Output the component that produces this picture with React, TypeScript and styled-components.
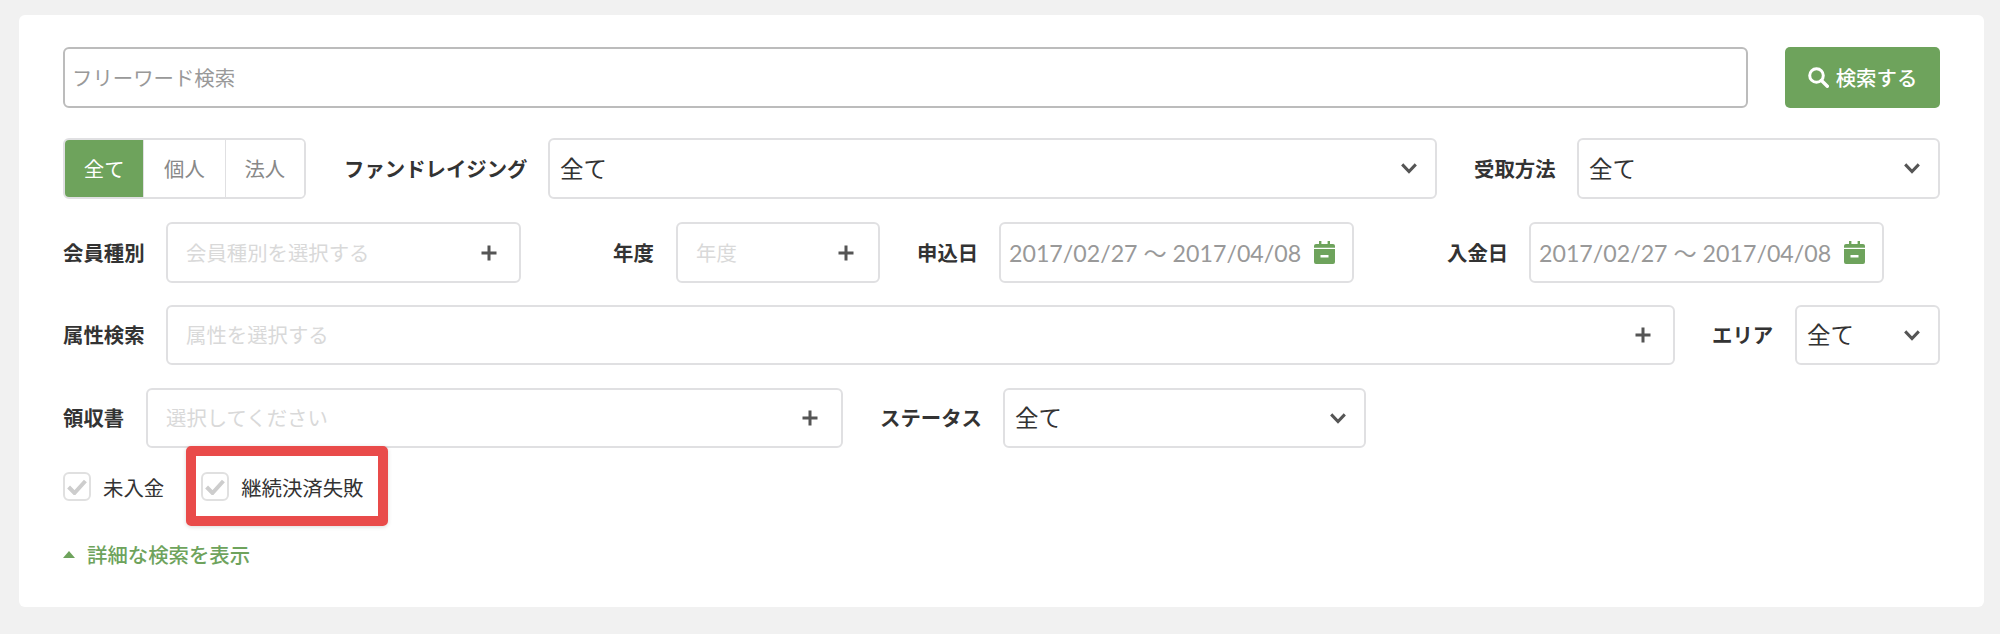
import React from "react";
import styled, { createGlobalStyle } from "styled-components";

const Global = createGlobalStyle`
  html, body { margin: 0; padding: 0; background: #f1f1f1; }
  body { font-family: "Lato", "Noto Sans CJK JP", sans-serif; color: #333; }
  * { box-sizing: border-box; }
`;

const Card = styled.div`
  margin: 15px 16px 27px 19px;
  height: 592px;
  padding: 32px 44px 0;
  background: #fff;
  border-radius: 6px;
`;

const Row = styled.div<{ $top?: number; $height?: number }>`
  display: flex;
  align-items: center;
  height: ${(p) => p.$height ?? 61}px;
  margin-top: ${(p) => p.$top ?? 0}px;
`;

const Field = styled.div<{ $left?: number }>`
  display: flex;
  align-items: center;
  height: 100%;
  margin-left: ${(p) => p.$left ?? 0}px;
`;

const Label = styled.span<{ $width: number }>`
  flex: none;
  width: ${(p) => p.$width}px;
  padding-bottom: 2px;
  font-size: 20.4px;
  font-weight: 700;
  color: #333;
  white-space: nowrap;
`;

const Control = styled.div<{ $width: number }>`
  display: flex;
  flex: none;
  align-items: center;
  justify-content: space-between;
  width: ${(p) => p.$width}px;
  height: 100%;
  background: #fff;
  border: 2px solid #e0e0e2;
  border-radius: 6px;
`;

const SearchBox = styled(Control)`
  border-color: #bcbcbc;
  padding: 0 0 2px 7px;
  font-size: 20.4px;
  color: #999;
`;

const SearchButton = styled.div`
  display: flex;
  align-items: center;
  justify-content: center;
  gap: 7px;
  width: 155px;
  height: 100%;
  margin-left: 37px;
  padding-bottom: 1px;
  background: #6ea35c;
  border-radius: 5px;
  color: #fff;
  font-size: 20.4px;
  font-weight: 500;
`;

const Segmented = styled.div`
  display: flex;
  width: 243px;
  height: 100%;
  border: 2px solid #e0e0e2;
  border-radius: 6px;
  overflow: hidden;
`;

const Segment = styled.div<{ $active?: boolean; $width: number }>`
  display: flex;
  align-items: center;
  justify-content: center;
  width: ${(p) => p.$width}px;
  padding-bottom: 2px;
  font-size: 20.4px;
  background: ${(p) => (p.$active ? "#6ea35c" : "#fff")};
  color: ${(p) => (p.$active ? "#fff" : "#888")};
  & + & { border-left: ${(p) => (p.$active ? 0 : 1)}px solid #e0e0e2; }
`;

const SelectValue = styled.span`
  font-size: 23.5px;
  color: #333;
  padding: 0 0 2px 10px;
`;

const Placeholder = styled.span`
  font-size: 20.4px;
  color: #d9d9d9;
  padding: 0 0 2px 18px;
`;

const DateValue = styled.span`
  font-size: 23.2px;
  color: #999;
  padding: 0 0 2px 8px;
  white-space: nowrap;
`;

const IconSlot = styled.span<{ $right: number }>`
  display: flex;
  margin-right: ${(p) => p.$right}px;
`;

const CheckRow = styled(Row)`
  height: 29px;
  margin-top: 24px;
`;

const CheckItem = styled.label<{ $left?: number }>`
  position: relative;
  display: flex;
  align-items: center;
  gap: 12px;
  margin-left: ${(p) => p.$left ?? 0}px;
  font-size: 20.4px;
  color: #333;
`;

const CheckBox = styled.span`
  display: flex;
  align-items: center;
  justify-content: center;
  width: 28px;
  height: 29px;
  border: 2px solid #e0e0e0;
  border-radius: 6px;
  background: #fff;
`;

const Highlight = styled.span`
  position: absolute;
  left: -15px;
  top: -26px;
  width: 202px;
  height: 80px;
  border: 10px solid #e94b4a;
  border-radius: 5px;
  box-shadow: 0 1px 4px rgba(0, 0, 0, 0.15);
`;

const MoreLink = styled.div`
  display: flex;
  align-items: center;
  gap: 12px;
  margin-top: 40px;
  height: 26px;
  font-size: 20.4px;
  font-weight: 500;
  color: #6ea35c;
`;

const Triangle = styled.span`
  width: 0;
  height: 0;
  border-left: 6px solid transparent;
  border-right: 6px solid transparent;
  border-bottom: 7px solid #6ea35c;
`;

const Chevron = () => (
  <svg width="16" height="11" viewBox="0 0 16 11" fill="none">
    <path d="M1.2 1.4 L8 8.6 L14.8 1.4" stroke="#555" strokeWidth="3" />
  </svg>
);

const Plus = () => (
  <svg width="16" height="16" viewBox="0 0 16 16" fill="none">
    <path d="M8 0.5 V15.5 M0.5 8 H15.5" stroke="#555" strokeWidth="3" />
  </svg>
);

const Calendar = () => (
  <svg width="21" height="23" viewBox="0 0 21 23">
    <path
      fillRule="evenodd"
      fill="#6ea35c"
      d="M5 0 h2.4 v3 h6.2 v-3 h2.4 v3 h3 a2 2 0 0 1 2 2 v1.8 h-21 v-1.8 a2 2 0 0 1 2 -2 h3 z M0 8 h21 v13 a2 2 0 0 1 -2 2 h-17 a2 2 0 0 1 -2 -2 z M6.5 14 v2.6 h8 v-2.6 z"
    />
  </svg>
);

const Check = () => (
  <svg width="20" height="16" viewBox="0 0 20 16" fill="none">
    <path d="M1.6 8 L7.5 14 L18.4 2" stroke="#cdcdcd" strokeWidth="4" />
  </svg>
);

const SearchIcon = () => (
  <svg width="21" height="21" viewBox="0 0 21 21" fill="none">
    <circle cx="8.5" cy="8.5" r="6.8" stroke="#fff" strokeWidth="3" />
    <path d="M13.5 13.5 L19.3 19.3" stroke="#fff" strokeWidth="3.4" strokeLinecap="round" />
  </svg>
);

const Select = ({ width }: { width: number }) => (
  <Control $width={width}>
    <SelectValue>全て</SelectValue>
    <IconSlot $right={18}><Chevron /></IconSlot>
  </Control>
);

const Picker = ({ width, text, plusRight = 22 }: { width: number; text: string; plusRight?: number }) => (
  <Control $width={width}>
    <Placeholder>{text}</Placeholder>
    <IconSlot $right={plusRight}><Plus /></IconSlot>
  </Control>
);

const DateRange = () => (
  <Control $width={355}>
    <DateValue>2017/02/27 ～ 2017/04/08</DateValue>
    <IconSlot $right={17}><Calendar /></IconSlot>
  </Control>
);

export default function App() {
  return (
    <>
      <Global />
      <Card>
        <Row>
          <SearchBox $width={1685}>フリーワード検索</SearchBox>
          <SearchButton><SearchIcon />検索する</SearchButton>
        </Row>

        <Row $top={30}>
          <Segmented>
            <Segment $active $width={79}>全て</Segment>
            <Segment $width={82}>個人</Segment>
            <Segment $width={80}>法人</Segment>
          </Segmented>
          <Field $left={38}>
            <Label $width={204}>ファンドレイジング</Label>
            <Select width={889} />
          </Field>
          <Field $left={37}>
            <Label $width={103}>受取方法</Label>
            <Select width={363} />
          </Field>
        </Row>

        <Row $top={23}>
          <Field>
            <Label $width={103}>会員種別</Label>
            <Picker width={355} text="会員種別を選択する" />
          </Field>
          <Field $left={92}>
            <Label $width={63}>年度</Label>
            <Picker width={204} text="年度" plusRight={24} />
          </Field>
          <Field $left={37}>
            <Label $width={82}>申込日</Label>
            <DateRange />
          </Field>
          <Field $left={93}>
            <Label $width={82}>入金日</Label>
            <DateRange />
          </Field>
        </Row>

        <Row $top={22} $height={60}>
          <Field>
            <Label $width={103}>属性検索</Label>
            <Picker width={1509} text="属性を選択する" />
          </Field>
          <Field $left={37}>
            <Label $width={83}>エリア</Label>
            <Select width={145} />
          </Field>
        </Row>

        <Row $top={23} $height={60}>
          <Field>
            <Label $width={83}>領収書</Label>
            <Picker width={697} text="選択してください" plusRight={23} />
          </Field>
          <Field $left={37}>
            <Label $width={123}>ステータス</Label>
            <Select width={363} />
          </Field>
        </Row>

        <CheckRow>
          <CheckItem>
            <CheckBox><Check /></CheckBox>
            未入金
          </CheckItem>
          <CheckItem $left={37}>
            <CheckBox><Check /></CheckBox>
            継続決済失敗
            <Highlight />
          </CheckItem>
        </CheckRow>

        <MoreLink><Triangle />詳細な検索を表示</MoreLink>
      </Card>
    </>
  );
}
